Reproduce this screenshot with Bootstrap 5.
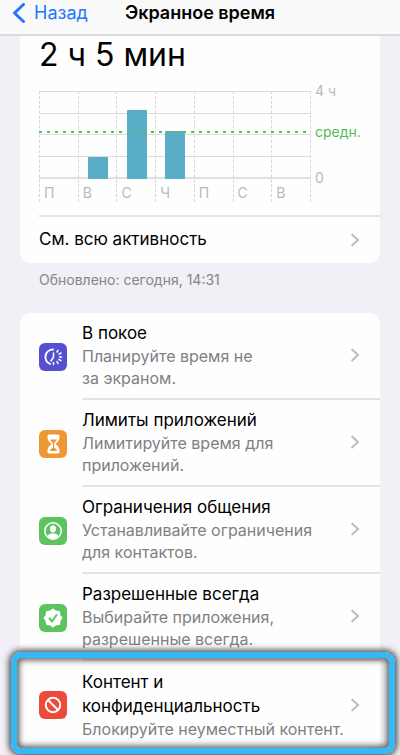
<!DOCTYPE html>
<html lang="ru">
<head>
<meta charset="utf-8">
<meta name="viewport" content="width=device-width, initial-scale=1">
<title>Экранное время</title>
<link href="https://cdn.jsdelivr.net/npm/bootstrap@5.3.0/dist/css/bootstrap.min.css" rel="stylesheet">
<style>
body { font-family: Inter, "Liberation Sans", sans-serif; background: #f0f0f6; color: #000; }
a { color: inherit; text-decoration: none; }
.topbar { display: grid; grid-template-columns: 1fr auto 1fr; height: 36px; padding: 0 12px 8px; background: #f9f9f9; border-bottom: 2px solid #dcdcdf; font-size: 18px; line-height: 26px; }
.topbar h1 { font-size: 18px; line-height: 26px; }
.back { color: #2276fb; }
.page-body { padding-bottom: 6px; }
.panel { background: #fefefe; border-radius: 10px; }
.panel-top { border-radius: 0 0 10px 10px; }
.total { font-size: 32px; line-height: 38px; padding-left: 19px; }
.chart { display: grid; grid-template-columns: 1fr 50px; padding: 17px 19px 13px 19px; font-size: 14px; line-height: 16px; color: #b9b9bd; }
.plot { display: grid; grid-template-rows: 88px 23px; }
.layer { grid-area: 1 / 1; }
.days { grid-area: 1 / 1 / 3 / 2; display: grid; grid-template-columns: repeat(7, 1fr); border-right: 1px dashed #d6d6da; }
.days span { border-left: 1px dashed #d6d6da; padding: 94px 0 0 4px; }
.lines { display: flex; flex-direction: column; border-bottom: 2px solid #dfdfe1; }
.lines i { flex: 1; border-top: 1px solid #dcdcdf; }
.bars { display: grid; grid-template-columns: repeat(7, 1fr); align-items: end; justify-items: center; padding-left: 1px; }
.bars b { width: 20px; background: #5aadc6; border-radius: 1px 1px 0 0; }
.average { margin-top: 40px; height: 2px; background: repeating-linear-gradient(90deg, #52c056 0 3px, transparent 3px 8px); }
.scale { padding-left: 4px; margin-top: -8px; height: 103px; }
.scale .mid { color: #4fbe54; margin-top: -6px; }
.rule-row { border-top: 2px solid #e3e3e5; margin-left: 19px; padding-right: 20px; height: 48px; font-size: 17px; }
.updated { font-size: 14px; line-height: 20px; color: #85858a; padding: 7px 19px 23px; }
.item { position: relative; padding-left: 19px; gap: 15px; }
.item-body { border-bottom: 2px solid #e3e3e5; padding: 7px 20px 8px 0; height: 87px; }
.item:last-child .item-body { border: 0; height: 88px; }
.item h2 { font-size: 17px; line-height: 24px; font-weight: 400; margin: 0; }
.item p { font-size: 16px; line-height: 22px; color: #808084; margin: 0; }
.tile { width: 28px; height: 28px; border-radius: 6px; }
.tile-rest { background: #5650d0; }
.tile-limit { background: #ed9834; }
.tile-green { background: #5cc35f; }
.tile-red { background: #ec4b3a; }
.focus-frame { position: absolute; inset: -9px -15px -5px -9px; border: 6px solid #36b8f3; border-radius: 10px; box-shadow: 0 0 6px 2px #444, inset 0 0 6px 2px #555; pointer-events: none; }
</style>
<script src="https://cdn.jsdelivr.net/npm/bootstrap@5.3.0/dist/js/bootstrap.bundle.min.js"></script>
</head>
<body>
<header class="topbar sticky-top">
  <a href="#" class="back d-flex align-items-center gap-2">
    <svg width="14" height="20" viewBox="0 0 14 20" fill="none" stroke="currentColor" stroke-width="3" stroke-linecap="round" stroke-linejoin="round" aria-hidden="true"><path d="M11.5 1.5 2.5 10l9 8.5"/></svg>
    <span>Назад</span>
  </a>
  <h1 class="fw-semibold m-0">Экранное время</h1>
</header>
<main class="page-body overflow-hidden">
  <div class="px-3">
    <div class="px-1">
      <section class="panel panel-top">
        <div class="total">2 ч 5 мин</div>
        <div class="chart">
          <div class="plot">
            <div class="days"><span>П</span><span>В</span><span>С</span><span>Ч</span><span>П</span><span>С</span><span>В</span></div>
            <div class="layer lines"><i></i><i></i><i></i><i></i></div>
            <div class="layer bars"><b></b><b style="height:25%"></b><b style="height:78%"></b><b style="height:54%"></b></div>
            <div class="layer average"></div>
          </div>
          <div class="scale d-flex flex-column justify-content-between"><span>4 ч</span><span class="mid">средн.</span><span>0</span></div>
        </div>
        <a href="#" class="rule-row d-flex align-items-center justify-content-between">
          <span>См. всю активность</span>
          <svg width="10" height="14" viewBox="0 0 10 14" fill="none" stroke="#bdbdc1" stroke-width="2" aria-hidden="true"><path d="m1.500 1 6.500 6-6.500 6"/></svg>
        </a>
      </section>
      <div class="updated">Обновлено: сегодня, 14:31</div>
      <section class="panel">
        <a href="#" class="item d-flex align-items-center">
          <svg class="tile tile-rest flex-shrink-0" viewBox="0 0 28 28" fill="none" stroke="#fff" stroke-linecap="round" aria-hidden="true"><path stroke-width="2" d="M14 6.500a7.500 7.500 0 0 0-3 14.400"/><path stroke-width="1.500" d="M14.500 10v4l-2.500 4M14.500 19.500v2M18 18.500l1 2M20 16.500l2 1.200M20.500 14h2M20 11.200l2-1.200M18 9l1-1.700"/></svg>
          <div class="item-body d-flex flex-fill align-items-center justify-content-between"><div><h2>В покое</h2><p>Планируйте время не<br>за экраном.</p></div><svg width="10" height="14" viewBox="0 0 10 14" fill="none" stroke="#bdbdc1" stroke-width="2" aria-hidden="true"><path d="m1.500 1 6.500 6-6.500 6"/></svg></div>
        </a>
        <a href="#" class="item d-flex align-items-center">
          <svg class="tile tile-limit flex-shrink-0" viewBox="0 0 28 28" aria-hidden="true"><path fill="#fff" d="M10 4.500h9q1.500 0 1.500 1.500c0 4-1 5.500-4 8 3 2.500 4 4 4 8q0 1.500-1.500 1.500h-9Q8.500 23.500 8.500 22c0-4 1-5.500 4-8-3-2.500-4-4-4-8q0-1.500 1.500-1.500z"/><path fill="#ed9834" d="M11.200 9.500h6.600c-.5 1.700-1.600 2.700-2.700 3.600v4.400c1.500 1.200 2.700 2 3 3.500h-7.200c.3-1.500 1.500-2.300 3-3.500v-4.400c-1.100-.9-2.200-1.900-2.700-3.600z"/></svg>
          <div class="item-body d-flex flex-fill align-items-center justify-content-between"><div><h2>Лимиты приложений</h2><p>Лимитируйте время для<br>приложений.</p></div><svg width="10" height="14" viewBox="0 0 10 14" fill="none" stroke="#bdbdc1" stroke-width="2" aria-hidden="true"><path d="m1.500 1 6.500 6-6.500 6"/></svg></div>
        </a>
        <a href="#" class="item d-flex align-items-center">
          <svg class="tile tile-green flex-shrink-0" viewBox="0 0 28 28" fill="#fff" aria-hidden="true"><circle cx="14" cy="14" r="8.200" fill="none" stroke="#fff" stroke-width="1.600"/><ellipse cx="14" cy="11.800" rx="3" ry="3.600"/><path d="M8.300 19c1.200-2 3.200-2.800 5.700-2.800s4.500.8 5.700 2.800c-1.500 1.600-3.500 2.400-5.700 2.400S9.800 20.600 8.300 19z"/></svg>
          <div class="item-body d-flex flex-fill align-items-center justify-content-between"><div><h2>Ограничения общения</h2><p>Устанавливайте ограничения<br>для контактов.</p></div><svg width="10" height="14" viewBox="0 0 10 14" fill="none" stroke="#bdbdc1" stroke-width="2" aria-hidden="true"><path d="m1.500 1 6.500 6-6.500 6"/></svg></div>
        </a>
        <a href="#" class="item d-flex align-items-center">
          <svg class="tile tile-green flex-shrink-0" viewBox="0 0 28 28" aria-hidden="true"><path fill="#fff" stroke="#fff" stroke-width="2" stroke-linejoin="round" d="m14 5.500 2.500 2 3.500.500.500 3.500 2 2.500-2 2.500-.5 3.500-3.500.5-2.500 2-2.500-2-3.500-.5-.5-3.500-2-2.500 2-2.500.5-3.500 3.500-.5z"/><path fill="none" stroke="#5cc35f" stroke-width="2" stroke-linecap="round" stroke-linejoin="round" d="m10.500 14.500 2.500 3 4.500-6.500"/></svg>
          <div class="item-body d-flex flex-fill align-items-center justify-content-between"><div><h2>Разрешенные всегда</h2><p>Выбирайте приложения,<br>разрешенные всегда.</p></div><svg width="10" height="14" viewBox="0 0 10 14" fill="none" stroke="#bdbdc1" stroke-width="2" aria-hidden="true"><path d="m1.500 1 6.500 6-6.500 6"/></svg></div>
        </a>
        <a href="#" class="item d-flex align-items-center">
          <svg class="tile tile-red flex-shrink-0" viewBox="0 0 28 28" fill="none" stroke="#fff" stroke-width="2" aria-hidden="true"><circle cx="14" cy="14" r="7.200"/><path d="m9 9 10 10"/></svg>
          <div class="item-body d-flex flex-fill align-items-center justify-content-between"><div><h2>Контент и<br>конфиденциальность</h2><p class="text-nowrap">Блокируйте неуместный контент.</p></div><svg class="flex-shrink-0" width="10" height="14" viewBox="0 0 10 14" fill="none" stroke="#bdbdc1" stroke-width="2" aria-hidden="true"><path d="m1.500 1 6.500 6-6.500 6"/></svg></div>
          <span class="focus-frame"></span>
        </a>
      </section>
    </div>
  </div>
</main>
</body>
</html>
